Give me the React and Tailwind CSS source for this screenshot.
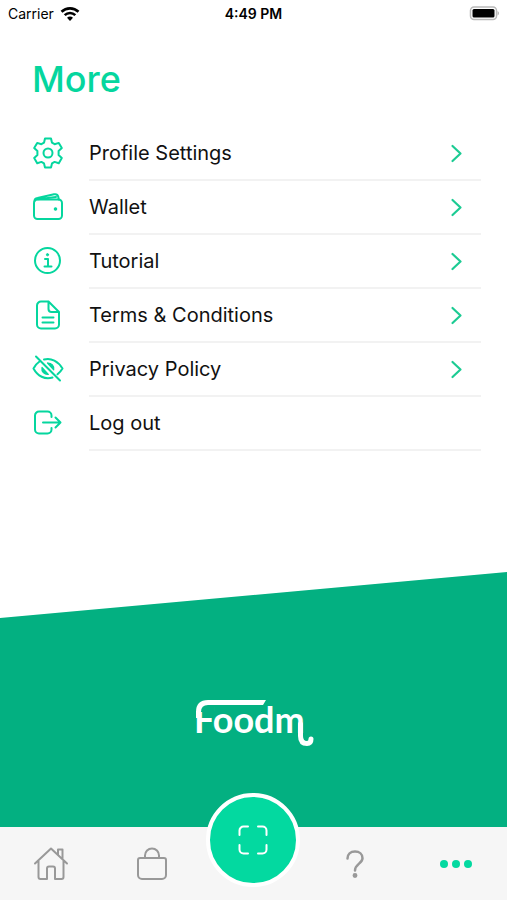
import React from "react";

const line = {
  fill: "none",
  stroke: "currentColor",
  strokeWidth: 2,
  strokeLinecap: "round",
  strokeLinejoin: "round",
};

function GearIcon() {
  return (
    <svg viewBox="0 0 32 32" className="size-8" {...line} aria-hidden="true">
      <path d="M13 1.500h6l1 4.200 2.600 1.500 4.200-1.300 3 5.200-3.200 3v3.900l3.200 3-3 5.200-4.200-1.300L20 26.400l-1 4.100h-6l-1-4.100-2.600-1.500-4.200 1.300-3-5.200 3.200-3v-3.900l-3.200-3 3-5.200 4.200 1.300L12 5.700z" />
      <circle cx="16" cy="16" r="4.500" />
    </svg>
  );
}

function WalletIcon() {
  return (
    <svg viewBox="0 0 32 32" className="size-8" {...line} aria-hidden="true">
      <rect x="2" y="8.500" width="28" height="19.500" rx="3.500" />
      <path d="M2.500 10c0-2 1.200-2.700 3-3L22 3.300c2.500-.5 3.700.3 4.200 2.200l.6 3M6 8.300l18-2.300" />
      <circle cx="23.500" cy="18" r="1.200" fill="currentColor" strokeWidth="1.200" />
    </svg>
  );
}

function InfoIcon() {
  return (
    <svg viewBox="0 0 32 32" className="size-8" {...line} aria-hidden="true">
      <circle cx="15.500" cy="15.500" r="12.500" />
      <path d="M13 14h3v7.500M12.500 21.500h7" />
      <circle cx="15.500" cy="9.700" r="1.100" fill="currentColor" strokeWidth="1" />
    </svg>
  );
}

function DocumentIcon() {
  return (
    <svg viewBox="0 0 32 32" className="size-8" {...line} aria-hidden="true">
      <path d="M16 2.500H9A4 4 0 0 0 5 6.500v19a4 4 0 0 0 4 4h14a4 4 0 0 0 4-4V13L16.500 2.500V10a3 3 0 0 0 3 3H27M10.500 18.500h11M10.500 23.500h11" />
    </svg>
  );
}

function HiddenIcon() {
  return (
    <svg viewBox="0 0 32 32" className="size-8" {...line} aria-hidden="true">
      <path d="M4 3.500l24 24M12 6.500c7-2.200 14.500 2 18.500 9-1.300 2.200-3 4.200-5 5.800M7.500 8.500c-2.500 1.700-4.500 4-6 7 4 7.500 11.500 11.500 19 9" />
      <path d="M15.500 10c4-.2 7 3 6.200 6.800zM10 14.500c-.8 4 2.300 7.300 6.300 7z" fill="currentColor" strokeWidth="1.200" />
    </svg>
  );
}

function LogoutIcon() {
  return (
    <svg viewBox="0 0 32 32" className="size-8" {...line} aria-hidden="true">
      <path d="M19.500 10V8.500a4 4 0 0 0-4-4H7a4 4 0 0 0-4 4v14a4 4 0 0 0 4 4h8.500a4 4 0 0 0 4-4V21M11 15.500h17.500M23.500 10.500l5 5-5 5" />
    </svg>
  );
}

const items = [
  { label: "Profile Settings", Icon: GearIcon, chevron: true },
  { label: "Wallet", Icon: WalletIcon, chevron: true },
  { label: "Tutorial", Icon: InfoIcon, chevron: true },
  { label: "Terms & Conditions", Icon: DocumentIcon, chevron: true },
  { label: "Privacy Policy", Icon: HiddenIcon, chevron: true },
  { label: "Log out", Icon: LogoutIcon, chevron: false },
];

function StatusBar() {
  return (
    <div className="grid h-7 grid-cols-3 items-center px-2 text-sm text-black">
      <div className="flex items-center gap-1.5">
        <span>Carrier</span>
        <svg viewBox="0 0 20 15" className="h-4 w-5" fill="none" stroke="currentColor" strokeWidth="2.600" aria-label="Wi-Fi">
          <path d="M1.500 5.300c4.800-4.600 12.200-4.600 17 0M4.700 8.600c3-2.900 7.600-2.900 10.600 0" />
          <path d="M10 14.500l-3-3.200c1.700-1.600 4.300-1.600 6 0z" fill="currentColor" stroke="none" />
        </svg>
      </div>
      <span className="text-center font-semibold">4:49 PM</span>
      <svg viewBox="0 0 30 16" className="h-4 w-[30px] justify-self-end" aria-label="Battery full">
        <rect x="1.500" y="1" width="26" height="12.500" rx="3.500" fill="#fff" stroke="#b9b9b9" strokeWidth="1.500" />
        <rect x="3.500" y="3" width="22" height="8.500" rx="1.500" fill="#000" />
        <path d="M28.500 5c2 .8 2 3.700 0 4.500z" fill="#b9b9b9" />
      </svg>
    </div>
  );
}

function MenuItem({ label, Icon, chevron }) {
  return (
    <li className="flex h-[54px]">
      <button type="button" className="flex flex-1 text-left">
        <span className="flex h-full w-[57px] items-center pb-0.5 text-[#05d69e]">
          <Icon />
        </span>
        <span className="flex h-full flex-1 items-center justify-between border-b-2 border-[#f2f2f2] pr-[18px] text-xl text-[#111]">
          {label}
          {chevron && (
            <svg viewBox="0 0 14 20" className="h-5 w-[14px] text-[#1ccb93]" {...line} strokeWidth="2.200" aria-hidden="true">
              <path d="M3.500 3l8 7.500L3.500 18" />
            </svg>
          )}
        </span>
      </button>
    </li>
  );
}

function Logo() {
  return (
    <svg viewBox="0 -10 120 60" className="h-[60px] w-[120px] overflow-visible" role="img" aria-label="Foodm">
      <text x="0" y="35" fill="#fff" className="font-['Lato',sans-serif] text-[36px] font-bold">
        Foodm
      </text>
      <path d="M0 17V0h20v14H7V17z" fill="#03b081" />
      <path d="M4.500 20V14Q4.500 4.500 14 4.500H69" fill="none" stroke="#fff" strokeWidth="5" />
      <path d="M72 2L69 7H66V2z" fill="#fff" />
      <path d="M106.500 26v12q0 7.500 6.500 7.500 4 0 4-4.500" fill="none" stroke="#fff" strokeWidth="5" strokeLinecap="round" />
    </svg>
  );
}

function TabBar() {
  return (
    <nav className="relative grid h-[73px] grid-cols-5 bg-[#f6f6f6] text-[#999]">
      <button type="button" aria-label="Home" className="flex items-center justify-center">
        <svg viewBox="0 0 36 36" className="size-9" {...line} aria-hidden="true">
          <path d="M2 17.500L18 2.500l16 15M5.500 15v16a2 2 0 0 0 2 2H14V22.500a2 2 0 0 1 2-2h4a2 2 0 0 1 2 2V33h6.500a2 2 0 0 0 2-2V15M25 8.500V3.500h4.500v9" />
        </svg>
      </button>
      <button type="button" aria-label="Shop" className="flex items-center justify-center">
        <svg viewBox="0 0 36 36" className="size-9" {...line} aria-hidden="true">
          <path d="M6 12h24a2 2 0 0 1 2 2v15a4 4 0 0 1-4 4H8a4 4 0 0 1-4-4V14a2 2 0 0 1 2-2zM11 12V9.500a7 7 0 0 1 14 0V12" />
        </svg>
      </button>
      <div className="relative">
        <button
          type="button"
          aria-label="Scan"
          className="absolute -top-[34px] left-1/2 flex size-[94px] -translate-x-1/2 items-center justify-center rounded-full border-4 border-white bg-[#03d9a0] text-white"
        >
          <svg viewBox="0 0 30 30" className="size-[30px]" {...line} aria-hidden="true">
            <path d="M1.500 10V5.500a4 4 0 0 1 4-4H10M20 1.500h4.500a4 4 0 0 1 4 4V10M28.500 20v4.500a4 4 0 0 1-4 4H20M10 28.500H5.500a4 4 0 0 1-4-4V20" />
          </svg>
        </button>
      </div>
      <button type="button" aria-label="Help" className="flex items-center justify-center">
        <svg viewBox="0 0 20 30" className="h-[30px] w-5" {...line} strokeWidth="2.500" aria-hidden="true">
          <path d="M2.500 9.500C2.500 5 5.500 2.500 10 2.500s7.500 2.700 7.500 6.700c0 5.300-7.500 5.800-7.500 12.300" />
          <circle cx="10" cy="26.500" r="1.200" fill="currentColor" />
        </svg>
      </button>
      <button type="button" aria-label="More" className="flex items-center justify-center gap-1 text-[#03d9a0]">
        <span className="size-2 rounded-full bg-current" />
        <span className="size-2 rounded-full bg-current" />
        <span className="size-2 rounded-full bg-current" />
      </button>
    </nav>
  );
}

export default function App() {
  return (
    <div className="flex min-h-screen flex-col bg-white font-['Inter','Liberation_Sans',sans-serif]">
      <StatusBar />
      <main className="flex flex-1 flex-col">
        <h1 className="px-8 pt-7 text-4xl leading-[46px] font-medium text-[#05d69e]">More</h1>
        <ul className="mt-[25px] mr-[26px] ml-8">
          {items.map((item) => (
            <MenuItem key={item.label} {...item} />
          ))}
        </ul>
        <section className="mt-auto flex h-[255px] items-end justify-center bg-[#03b081] pb-[79px] [clip-path:polygon(0_18%,100%_0,100%_100%,0_100%)]">
          <Logo />
        </section>
      </main>
      <TabBar />
    </div>
  );
}
